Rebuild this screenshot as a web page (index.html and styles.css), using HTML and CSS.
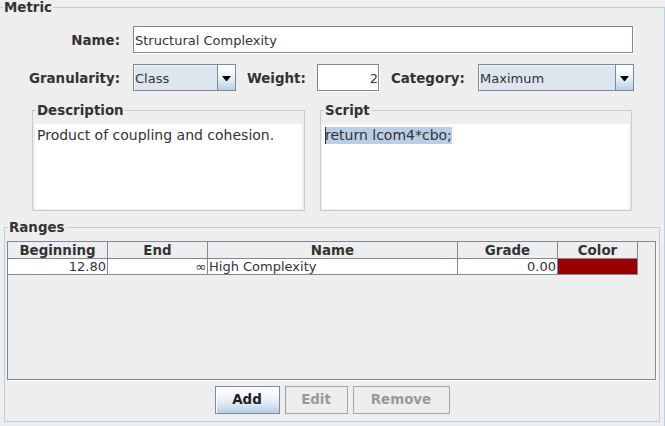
FILE: index.html
```html
<!DOCTYPE html>
<html>
<head>
<meta charset="utf-8">
<link rel="stylesheet" href="styles.css">
</head>
<body>
<div class="group metric">
  <span class="gtitle">Metric</span>
  <div class="row">
    <span class="lbl">Name:</span>
    <div class="field name">Structural Complexity</div>
  </div>
  <div class="row r2">
    <span class="lbl">Granularity:</span>
    <div class="combo gran">
      <span class="combo-text">Class</span>
      <span class="combo-btn"><svg width="9" height="5" viewBox="0 0 9 5"><path d="M0 0H9L5 5H4Z" fill="#000"/></svg></span>
    </div>
    <span class="lbl2 wlbl">Weight:</span>
    <div class="field weight">2</div>
    <span class="lbl2 clbl">Category:</span>
    <div class="combo cat">
      <span class="combo-text">Maximum</span>
      <span class="combo-btn"><svg width="9" height="5" viewBox="0 0 9 5"><path d="M0 0H9L5 5H4Z" fill="#000"/></svg></span>
    </div>
  </div>
  <div class="areas">
    <div class="group desc">
      <span class="gtitle">Description</span>
      <div class="area">Product of coupling and cohesion.</div>
    </div>
    <div class="group script">
      <span class="gtitle">Script</span>
      <div class="area"><span class="sel">return lcom4*cbo;</span></div>
    </div>
  </div>
  <div class="group ranges">
    <span class="gtitle">Ranges</span>
    <div class="scroll">
      <div class="thead">
        <div class="th c1">Beginning</div>
        <div class="th c2">End</div>
        <div class="th c3">Name</div>
        <div class="th c4">Grade</div>
        <div class="th c5">Color</div>
      </div>
      <div class="trow">
        <div class="td c1 num">12.80</div>
        <div class="td c2 num">∞</div>
        <div class="td c3">High Complexity</div>
        <div class="td c4 num">0.00</div>
        <div class="td c5 colorcell"></div>
      </div>
    </div>
    <div class="buttons">
      <div class="btn add">Add</div>
      <div class="btn dis edit">Edit</div>
      <div class="btn dis remove">Remove</div>
    </div>
  </div>
</div>
</body>
</html>
```

FILE: styles.css
```css
html, body {
  margin: 0;
}
body {
  padding-top: 7px;
  background: #EEEEEE;
  font-family: "DejaVu Sans", sans-serif;
  font-size: 13px;
  color: #333333;
  width: 665px;
  height: 426px;
  overflow: hidden;
}
.group {
  position: relative;
  border: 1px solid #B8CFE5;
  box-sizing: border-box;
}
.gtitle {
  position: absolute;
  top: -8px;
  left: 3px;
  padding: 0 1px;
  background: #EEEEEE;
  font-weight: bold;
  font-size: 13.4px;
  line-height: 15px;
  color: #333333;
  white-space: nowrap;
}
.metric {
  margin-left: -1px;
  width: 666px;
  height: 440px;
  padding-top: 18px;
}
.row {
  display: flex;
  align-items: baseline;
}
.r2 {
  margin-top: 11px;
}
.lbl {
  flex: none;
  width: 120px;
  margin-right: 13px;
  text-align: right;
  font-weight: bold;
  font-size: 13.4px;
  line-height: 15px;
  white-space: nowrap;
}
.lbl2 {
  flex: none;
  font-weight: bold;
  font-size: 13.4px;
  line-height: 15px;
  white-space: nowrap;
}
.wlbl {
  margin-left: 11px;
  width: 57px;
}
.clbl {
  margin-left: 12px;
  width: 75px;
}
.field {
  flex: none;
  box-sizing: border-box;
  height: 27px;
  border: 1px solid #7A8A99;
  background: #FFFFFF;
  box-shadow: 1px 1px 0 #FFFFFF;
  padding: 2px 0 0 1px;
  line-height: 23px;
  white-space: nowrap;
}
.name {
  width: 500px;
}
.weight {
  width: 62px;
  margin-left: 13px;
  text-align: right;
  padding-right: 0;
}
.combo {
  flex: none;
  display: flex;
  box-sizing: border-box;
  height: 27px;
  border: 1px solid #7A8A99;
}
.gran {
  width: 103px;
}
.cat {
  width: 156px;
  margin-left: 12px;
}
.combo-text {
  flex: 1;
  background: #DDE5EE;
  box-shadow: inset 1px 1px 0 #F4F7FA;
  padding: 2px 0 0 1px;
  line-height: 23px;
  white-space: nowrap;
}
.combo-btn {
  flex: none;
  width: 18px;
  box-sizing: border-box;
  border-left: 1px solid #7A8A99;
  background: linear-gradient(#FFFFFF 0%, #F3F7FB 35%, #DDE8F3 65%, #B8CFE5 100%);
  display: flex;
  align-items: center;
  justify-content: center;
  padding-top: 2px;
}
.combo-btn svg {
  display: block;
}
.areas {
  display: flex;
  margin-top: 19px;
  padding-left: 32px;
}
.desc {
  width: 273px;
  height: 101px;
  padding: 13px 2px 1px 2px;
}
.script {
  width: 312px;
  height: 101px;
  margin-left: 15px;
  padding: 13px 2px 1px 1px;
}
.area {
  box-sizing: border-box;
  height: 100%;
  background: #FFFFFF;
  font-size: 14px;
  white-space: nowrap;
}
.desc .area {
  padding: 3px 0 0 2px;
  line-height: 16px;
}
.script .area {
  padding: 3px 0 0 3px;
  line-height: 17px;
}
.sel {
  display: inline-block;
  background: #B8CFE5;
  box-shadow: inset 1px 0 0 #333333;
  line-height: 17px;
}
.ranges {
  margin-top: 16px;
  margin-left: 4px;
  width: 656px;
  height: 195px;
  padding: 13px 2px 0 2px;
}
.scroll {
  box-sizing: border-box;
  width: 649px;
  height: 139px;
  border: 1px solid #7A8A99;
  box-shadow: 1px 1px 0 #FFFFFF;
  background: #EEEEEE;
}
.thead, .trow {
  display: flex;
}
.c1 { width: 100px; }
.c2 { width: 100px; }
.c3 { width: 250px; }
.c4 { width: 100px; }
.c5 { width: 80px; }
.th {
  flex: none;
  box-sizing: border-box;
  height: 17px;
  padding-top: 1px;
  border-right: 1px solid #7A8A99;
  border-bottom: 1px solid #7A8A99;
  font-size: 13.4px;
  line-height: 15px;
  text-align: center;
  font-weight: bold;
  background: #EEEEEE;
}
.td {
  flex: none;
  box-sizing: border-box;
  height: 16px;
  padding: 0 1px;
  border-right: 1px solid #7A8A99;
  border-bottom: 1px solid #7A8A99;
  line-height: 15px;
  background: #FFFFFF;
  white-space: nowrap;
  overflow: hidden;
}
.num {
  text-align: right;
}
.colorcell {
  background: #990000;
}
.buttons {
  display: flex;
  justify-content: center;
  gap: 5px;
  margin-top: 6px;
}
.btn {
  box-sizing: border-box;
  height: 28px;
  border: 1px solid #7A8A99;
  font-weight: bold;
  font-size: 13.4px;
  line-height: 26px;
  text-align: center;
}
.add {
  width: 65px;
  color: #222222;
  background: linear-gradient(#FFFFFF 0%, #F3F7FB 35%, #DDE8F3 65%, #B8CFE5 100%);
  box-shadow: inset 1px 1px 0 #FFFFFF;
}
.dis {
  border-color: #A3A3A3;
  color: #999999;
  background: #EEEEEE;
}
.edit {
  width: 63px;
}
.remove {
  width: 97px;
}
```
